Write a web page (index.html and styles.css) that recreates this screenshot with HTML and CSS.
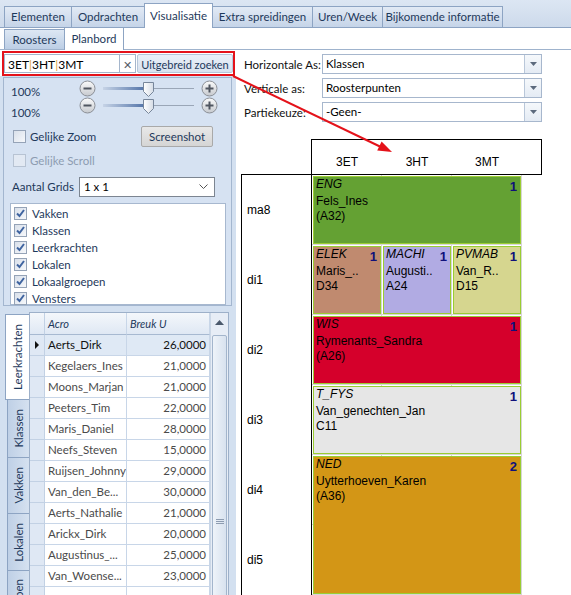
FILE: index.html
```html
<!DOCTYPE html>
<html>
<head>
    <title>Planbord</title>
    <link rel="stylesheet" href="styles.css">
</head>
<body>
    <svg class="defs" width="0" height="0">
        <defs>
            <linearGradient id="knob" x1="0" y1="0" x2="0" y2="1">
                <stop offset="0" stop-color="#fbfbfb"/>
                <stop offset="1" stop-color="#c6c9ce"/>
            </linearGradient>
            <linearGradient id="thumb" x1="0" y1="0" x2="1" y2="0">
                <stop offset="0" stop-color="#ffffff"/>
                <stop offset="1" stop-color="#d5dce6"/>
            </linearGradient>
        </defs>
    </svg>

    <div class="tabbar">
        <div class="tab tab-elementen">Elementen</div>
        <div class="tab tab-opdrachten">Opdrachten</div>
        <div class="tab tab-visualisatie active">Visualisatie</div>
        <div class="tab tab-extra">Extra spreidingen</div>
        <div class="tab tab-uren">Uren/Week</div>
        <div class="tab tab-info">Bijkomende informatie</div>
    </div>
    <div class="subtabs">
        <div class="subtab tab-roosters">Roosters</div>
        <div class="subtab tab-planbord active">Planbord</div>
    </div>

    <div class="main">
        <div class="left">
            <div class="search-wrap">
                <div class="search">
                    <div class="search-box">3ET<span class="sep">|</span>3HT<span class="sep">|</span>3MT</div>
                    <div class="search-clear">&#x2715;</div>
                    <div class="search-more">Uitgebreid zoeken</div>
                </div>
            </div>

            <div class="panel">
                <div class="zoom">
                    <div class="zoom-labels">
                        <div>100%</div>
                        <div>100%</div>
                    </div>
                    <div class="zoom-sliders">
                        <div class="slider">
                            <svg class="knob" width="17" height="17"><circle cx="8.5" cy="8.5" r="7.5" fill="url(#knob)" stroke="#8b8f96"/><rect x="4.5" y="7.5" width="8" height="2" fill="#505660"/></svg>
                            <div class="track-fill"></div>
                            <svg class="thumb" width="11" height="15"><path d="M0.5 0.5H10.5V9.5L5.5 14.5L0.5 9.5Z" fill="url(#thumb)" stroke="#77869b"/></svg>
                            <div class="track-rest"></div>
                            <svg class="knob" width="17" height="17"><circle cx="8.5" cy="8.5" r="7.5" fill="url(#knob)" stroke="#8b8f96"/><rect x="4.5" y="7.5" width="8" height="2" fill="#505660"/><rect x="7.5" y="4.5" width="2" height="8" fill="#505660"/></svg>
                        </div>
                        <div class="slider">
                            <svg class="knob" width="17" height="17"><circle cx="8.5" cy="8.5" r="7.5" fill="url(#knob)" stroke="#8b8f96"/><rect x="4.5" y="7.5" width="8" height="2" fill="#505660"/></svg>
                            <div class="track-fill"></div>
                            <svg class="thumb" width="11" height="15"><path d="M0.5 0.5H10.5V9.5L5.5 14.5L0.5 9.5Z" fill="url(#thumb)" stroke="#77869b"/></svg>
                            <div class="track-rest"></div>
                            <svg class="knob" width="17" height="17"><circle cx="8.5" cy="8.5" r="7.5" fill="url(#knob)" stroke="#8b8f96"/><rect x="4.5" y="7.5" width="8" height="2" fill="#505660"/><rect x="7.5" y="4.5" width="2" height="8" fill="#505660"/></svg>
                        </div>
                    </div>
                </div>

                <div class="opt-row">
                    <span class="check"></span>
                    <span>Gelijke Zoom</span>
                    <div class="btn">Screenshot</div>
                </div>
                <div class="opt-row disabled">
                    <span class="check"></span>
                    <span>Gelijke Scroll</span>
                </div>
                <div class="opt-row grids">
                    <span class="grids-label">Aantal Grids</span>
                    <div class="grids-combo">
                        <span>1 x 1</span>
                        <svg width="9" height="6"><path d="M0.5 0.5L4.5 4.5L8.5 0.5" stroke="#555" fill="none"/></svg>
                    </div>
                </div>

                <div class="list">
                    <div class="list-item"><span class="check on"><svg width="11" height="11"><path d="M2 5.5L4.5 8L9 2" stroke="#3f64a0" stroke-width="2" fill="none"/></svg></span>Vakken</div>
                    <div class="list-item"><span class="check on"><svg width="11" height="11"><path d="M2 5.5L4.5 8L9 2" stroke="#3f64a0" stroke-width="2" fill="none"/></svg></span>Klassen</div>
                    <div class="list-item"><span class="check on"><svg width="11" height="11"><path d="M2 5.5L4.5 8L9 2" stroke="#3f64a0" stroke-width="2" fill="none"/></svg></span>Leerkrachten</div>
                    <div class="list-item"><span class="check on"><svg width="11" height="11"><path d="M2 5.5L4.5 8L9 2" stroke="#3f64a0" stroke-width="2" fill="none"/></svg></span>Lokalen</div>
                    <div class="list-item"><span class="check on"><svg width="11" height="11"><path d="M2 5.5L4.5 8L9 2" stroke="#3f64a0" stroke-width="2" fill="none"/></svg></span>Lokaalgroepen</div>
                    <div class="list-item"><span class="check on"><svg width="11" height="11"><path d="M2 5.5L4.5 8L9 2" stroke="#3f64a0" stroke-width="2" fill="none"/></svg></span>Vensters</div>
                </div>
            </div>

            <div class="browser">
                <div class="vtabs">
                    <div class="vtab active"><span>Leerkrachten</span></div>
                    <div class="vtab klassen"><span>Klassen</span></div>
                    <div class="vtab vakken"><span>Vakken</span></div>
                    <div class="vtab lokalen"><span>Lokalen</span></div>
                    <div class="vtab groepen"><span>Lokaalgroepen</span></div>
                </div>
                <div class="grid">
                    <div class="grid-table">
                        <div class="grid-row head">
                            <div class="ind"></div>
                            <div class="c-acro">Acro</div>
                            <div class="c-num">Breuk U</div>
                        </div>
                        <div class="grid-row selected">
                            <div class="ind"><svg width="5" height="8"><path d="M0 0L4 4L0 8Z" fill="#111"/></svg></div>
                            <div class="c-acro">Aerts_Dirk</div>
                            <div class="c-num">26,0000</div>
                        </div>
                        <div class="grid-row"><div class="ind"></div><div class="c-acro">Kegelaers_Ines</div><div class="c-num">21,0000</div></div>
                        <div class="grid-row"><div class="ind"></div><div class="c-acro">Moons_Marjan</div><div class="c-num">21,0000</div></div>
                        <div class="grid-row"><div class="ind"></div><div class="c-acro">Peeters_Tim</div><div class="c-num">22,0000</div></div>
                        <div class="grid-row"><div class="ind"></div><div class="c-acro">Maris_Daniel</div><div class="c-num">28,0000</div></div>
                        <div class="grid-row"><div class="ind"></div><div class="c-acro">Neefs_Steven</div><div class="c-num">15,0000</div></div>
                        <div class="grid-row"><div class="ind"></div><div class="c-acro">Ruijsen_Johnny</div><div class="c-num">29,0000</div></div>
                        <div class="grid-row"><div class="ind"></div><div class="c-acro">Van_den_Be...</div><div class="c-num">30,0000</div></div>
                        <div class="grid-row"><div class="ind"></div><div class="c-acro">Aerts_Nathalie</div><div class="c-num">21,0000</div></div>
                        <div class="grid-row"><div class="ind"></div><div class="c-acro">Arickx_Dirk</div><div class="c-num">20,0000</div></div>
                        <div class="grid-row"><div class="ind"></div><div class="c-acro">Augustinus_...</div><div class="c-num">25,0000</div></div>
                        <div class="grid-row"><div class="ind"></div><div class="c-acro">Van_Woense...</div><div class="c-num">23,0000</div></div>
                        <div class="grid-row"><div class="ind"></div><div class="c-acro"></div><div class="c-num"></div></div>
                    </div>
                    <div class="scrollbar">
                        <div class="scroll-up"><svg width="9" height="5"><path d="M0 5L4.5 0L9 5Z" fill="#4b596c"/></svg></div>
                        <div class="scroll-thumb"><div class="grip"></div></div>
                    </div>
                </div>
            </div>
        </div>

        <div class="right">
            <div class="form-row">
                <div class="form-label">Horizontale As:</div>
                <div class="combo"><div class="combo-text">Klassen</div><div class="combo-btn"><svg width="7" height="4"><path d="M0 0H7L3.5 4Z" fill="#5c6a7d"/></svg></div></div>
            </div>
            <div class="form-row">
                <div class="form-label">Verticale as:</div>
                <div class="combo"><div class="combo-text">Roosterpunten</div><div class="combo-btn"><svg width="7" height="4"><path d="M0 0H7L3.5 4Z" fill="#5c6a7d"/></svg></div></div>
            </div>
            <div class="form-row">
                <div class="form-label">Partiekeuze:</div>
                <div class="combo"><div class="combo-text">-Geen-</div><div class="combo-btn"><svg width="7" height="4"><path d="M0 0H7L3.5 4Z" fill="#5c6a7d"/></svg></div></div>
            </div>

            <div class="planner">
                <div class="plan-head">
                    <div>3ET</div>
                    <div>3HT</div>
                    <div>3MT</div>
                </div>
                <div class="plan-body">
                    <div class="row-heads">
                        <div>ma8</div>
                        <div>di1</div>
                        <div>di2</div>
                        <div>di3</div>
                        <div>di4</div>
                        <div>di5</div>
                    </div>
                    <div class="cells">
                        <div class="lesson eng"><div class="subj">ENG<b>1</b></div>Fels_Ines<br>(A32)</div>
                        <div class="lesson elek"><div class="subj">ELEK<b>1</b></div>Maris_..<br>D34</div>
                        <div class="lesson machi"><div class="subj">MACHI<b>1</b></div>Augusti..<br>A24</div>
                        <div class="lesson pvmab"><div class="subj">PVMAB<b>1</b></div>Van_R..<br>D15</div>
                        <div class="lesson wis"><div class="subj">WIS<b>1</b></div>Rymenants_Sandra<br>(A26)</div>
                        <div class="lesson tfys"><div class="subj">T_FYS<b>1</b></div>Van_genechten_Jan<br>C11</div>
                        <div class="lesson ned"><div class="subj">NED<b>2</b></div>Uytterhoeven_Karen<br>(A36)</div>
                    </div>
                </div>
            </div>
        </div>
    </div>

    <!-- annotation arrow over the page -->
    <svg class="annot" width="571" height="595">
        <line x1="233" y1="76" x2="382" y2="147.5" stroke="#e4121a" stroke-width="2"/>
        <path d="M392 152L377.2 150.5L381.6 141.5Z" fill="#e4121a"/>
    </svg>
</body>
</html>
```

FILE: styles.css
```css
* {
    box-sizing: border-box;
}

body {
    margin: 0;
    width: 571px;
    height: 595px;
    overflow: hidden;
    position: relative;
    background: #ffffff;
    font-family: Lato, "Noto Sans", sans-serif;
    font-size: 11px;
    color: #1e395b;
}

.defs {
    position: absolute;
}

/* top tabs */
.tabbar {
    height: 28px;
    display: flex;
    align-items: flex-end;
    padding-left: 4px;
    background: linear-gradient(#dce6f3, #cddaeb);
    border-bottom: 1px solid #8da4c3;
}

.tab {
    height: 21px;
    line-height: 20px;
    margin-left: -1px;
    border: 1px solid #8da4c3;
    border-bottom: 0;
    background: linear-gradient(#e2eaf5, #c5d4e8);
    white-space: nowrap;
    text-align: center;
    font-size: 11.5px;
}

.tab:first-child {
    margin-left: 0;
}

.tab-elementen { width: 68px; }
.tab-opdrachten { width: 74px; }
.tab-visualisatie { width: 69px; }
.tab-extra { width: 101px; }
.tab-uren { width: 71px; }
.tab-info { width: 121px; }

.tab.active {
    height: 25px;
    line-height: 23px;
    margin-bottom: -1px;
    background: #ffffff;
}

.subtabs {
    height: 22px;
    display: flex;
    align-items: flex-end;
    padding-left: 4px;
    background: #ffffff;
    border-bottom: 1px solid #9fb3cd;
}

.subtab {
    height: 20px;
    line-height: 19px;
    margin-left: -1px;
    border: 1px solid #8da4c3;
    border-bottom: 0;
    background: linear-gradient(#dde7f3, #bccee5);
    text-align: center;
    font-size: 11.5px;
}

.subtab:first-child {
    margin-left: 0;
}

.tab-roosters { width: 61px; }
.tab-planbord { width: 60px; }

.subtab.active {
    height: 23px;
    line-height: 22px;
    margin-bottom: -1px;
    background: #ffffff;
}

.main {
    display: flex;
    height: 545px;
}

/* left column */
.left {
    width: 236px;
    flex: none;
    display: flex;
    flex-direction: column;
    background: #d3e0f0;
}

.search-wrap {
    background: #ffffff;
    padding: 1px 1px 0 2px;
}

.search {
    display: flex;
    height: 25px;
    border: 2px solid #e4121a;
    padding: 1px 0 1px 0;
}

.search-box {
    width: 115px;
    border: 1px solid #a5b6cc;
    border-right: 0;
    background: #ffffff;
    padding-left: 3px;
    line-height: 19px;
    font-size: 12px;
    color: #000000;
}

.sep {
    color: #e0a23e;
}

.search-clear {
    width: 17px;
    border: 1px solid #a5b6cc;
    background: #ffffff;
    color: #555d68;
    text-align: center;
    line-height: 19px;
    font-size: 11px;
}

.search-more {
    width: 96px;
    margin-left: 1px;
    border: 1px solid #b6c6da;
    border-radius: 2px;
    background: linear-gradient(#e9eff7, #d8e2ef);
    text-align: center;
    line-height: 19px;
    white-space: nowrap;
}

.panel {
    margin: 1px 4px 0 3px;
    height: 231px;
    border: 1px solid #a3b6cf;
    background: #d6e2f2;
}

.zoom {
    display: flex;
}

.zoom-labels {
    width: 75px;
    padding: 3px 0 0 7px;
    line-height: 21px;
    font-size: 11.5px;
}

.zoom-sliders {
    padding-top: 2px;
}

.slider {
    height: 17px;
    display: flex;
    align-items: center;
}

.track-fill {
    width: 40px;
    height: 3px;
    margin-left: 7px;
    background: linear-gradient(to right, #c6d3e6, #5878ab);
}

.track-rest {
    width: 40px;
    height: 1px;
    background: #9aa6b7;
}

.thumb {
    margin-top: 2px;
}

.slider .knob:last-child {
    margin-left: 7px;
}

.opt-row {
    display: flex;
    align-items: center;
    gap: 4px;
    padding-left: 9px;
    height: 21px;
    margin-top: 3px;
    font-size: 11.5px;
}

.opt-row:first-of-type {
    margin-top: 10px;
}

.opt-row.disabled {
    color: #8d9cb1;
    margin-top: 3px;
}

.opt-row.disabled .check {
    border-color: #b7c3d3;
    background: #e2e9f3;
}

.opt-row.grids {
    margin-top: 5px;
    padding-left: 8px;
    gap: 0;
}

.grids-label {
    width: 67px;
}

.grids-combo {
    width: 136px;
    height: 20px;
    border: 1px solid #7c8591;
    background: #ffffff;
    display: flex;
    align-items: center;
    justify-content: space-between;
    padding: 0 6px 0 4px;
    color: #000000;
}

.btn {
    margin-left: auto;
    margin-right: 18px;
    width: 72px;
    height: 21px;
    border: 1px solid #a9a9a9;
    border-radius: 2px;
    background: linear-gradient(#e8e8e8, #d5d5d5);
    text-align: center;
    line-height: 19px;
}

.check {
    width: 13px;
    height: 13px;
    flex: none;
    border: 1px solid #95a3b7;
    background: linear-gradient(135deg, #d9e0ea, #f6f8fb);
    display: flex;
    align-items: center;
    justify-content: center;
}

.list {
    margin: 6px 0 0 6px;
    width: 216px;
    height: 102px;
    border: 1px solid #a7b8cf;
    background: #ffffff;
    padding-top: 1px;
    font-size: 11.5px;
}

.list-item {
    height: 17px;
    display: flex;
    align-items: center;
    gap: 5px;
    padding-left: 3px;
}

/* lower browser: vertical tabs + grid */
.browser {
    display: flex;
    margin-top: 5px;
    padding-left: 5px;
}

.vtabs {
    width: 24px;
    flex: none;
    display: flex;
    flex-direction: column;
    padding-top: 3px;
    font-size: 11.5px;
}

.vtab {
    height: 58px;
    margin-left: 2px;
    border: 1px solid #8da4c3;
    border-right: 0;
    border-top: 0;
    background: linear-gradient(to right, #bfd0e6, #d5e1f0);
    display: flex;
    align-items: center;
    justify-content: center;
}

.vtab span {
    writing-mode: vertical-rl;
    transform: rotate(180deg);
    white-space: nowrap;
}

.vtab.active {
    height: 86px;
    margin-left: 0;
    border-top: 1px solid #8da4c3;
    background: #ffffff;
}

.vtab.vakken {
    height: 56px;
}

.vtab.lokalen {
    height: 57px;
}

.vtab.groepen {
    height: 84px;
    align-items: flex-start;
    padding-top: 8px;
}

.grid {
    width: 200px;
    height: 300px;
    margin-top: 1px;
    border: 1px solid #9db0c9;
    background: #ffffff;
    display: flex;
}

.grid-table {
    width: 180px;
}

.grid-row {
    display: flex;
    height: 21px;
}

.ind {
    width: 15px;
    background: #dfe8f4;
    border-right: 1px solid #c2d1e4;
    border-bottom: 1px solid #c2d1e4;
    display: flex;
    align-items: center;
    justify-content: center;
}

.c-acro,
.c-num {
    border-right: 1px solid #c8d6e8;
    border-bottom: 1px solid #c8d6e8;
    line-height: 20px;
    white-space: nowrap;
    overflow: hidden;
    color: #4a4a4a;
    font-size: 11.5px;
}

.c-acro {
    width: 82px;
    padding-left: 3px;
}

.c-num {
    width: 83px;
    padding-right: 3px;
    text-align: right;
}

.grid-row.head {
    height: 22px;
}

.grid-row.head > div {
    background: linear-gradient(#f4f7fb, #dfe8f4);
    border-bottom-color: #a7b9d1;
    font-style: italic;
    color: #1e395b;
    line-height: 21px;
    font-size: 11px;
}

.grid-row.head .c-num {
    text-align: left;
    padding-left: 3px;
}

.grid-row.selected .c-acro,
.grid-row.selected .c-num {
    background: #dfe9f5;
    color: #111111;
}

.scrollbar {
    width: 18px;
    background: #e7edf6;
    border-left: 1px solid #cbd7e6;
}

.scroll-up {
    height: 19px;
    display: flex;
    align-items: center;
    justify-content: center;
}

.scroll-thumb {
    height: 280px;
    margin: 3px 1px 0 1px;
    border: 1px solid #a3b5cc;
    border-radius: 2px;
    background: linear-gradient(to right, #eef3f9, #d8e2ef);
    padding-top: 183px;
}

.grip {
    width: 8px;
    height: 5px;
    margin: 0 auto;
    border-top: 1px solid #8d9cb1;
    border-bottom: 1px solid #8d9cb1;
    background: linear-gradient(#8d9cb1, #8d9cb1) center / 100% 1px no-repeat;
}

/* right column */
.right {
    flex: 1;
    padding-left: 5px;
}

.form-row {
    display: flex;
    align-items: center;
    height: 20px;
    margin-top: 4px;
    padding-left: 3px;
}

.form-label {
    width: 78px;
    color: #111111;
    font-size: 11.5px;
}

.combo {
    width: 220px;
    height: 20px;
    display: flex;
    border: 1px solid #a7b7cd;
    background: #ffffff;
}

.combo-text {
    flex: 1;
    padding-left: 3px;
    line-height: 18px;
    color: #000000;
    font-size: 11.5px;
}

.combo-btn {
    width: 17px;
    border-left: 1px solid #b9c7d9;
    background: linear-gradient(#f5f8fb, #e4ebf4);
    display: flex;
    align-items: center;
    justify-content: center;
}

/* planbord */
.planner {
    margin-top: 17px;
    font-family: "Liberation Sans", Arial, sans-serif;
    font-size: 12px;
    color: #000000;
}

.plan-head {
    margin-left: 70px;
    width: 231px;
    height: 36px;
    border: 1px solid #000000;
    display: flex;
    padding-top: 15px;
}

.plan-head div {
    width: 70px;
    text-align: center;
    line-height: 15px;
}

.plan-body {
    display: flex;
    margin-top: -1px;
}

.row-heads {
    width: 71px;
    border: 1px solid #000000;
    border-bottom: 0;
}

.row-heads div {
    height: 70px;
    line-height: 70px;
    padding-left: 5px;
}

.cells {
    margin-top: 1px;
    display: grid;
    grid-template-columns: repeat(3, 70px);
    grid-template-rows: repeat(6, 70px);
    background-image:
        linear-gradient(to left, #d6d6d6 1px, transparent 1px),
        linear-gradient(to top, #d6d6d6 1px, transparent 1px);
    background-size: 70px 70px;
}

.lesson {
    margin: 1px;
    border: 1px solid #9acd32;
    padding: 0 3px 0 2px;
    line-height: 15px;
    white-space: nowrap;
    overflow: hidden;
}

.subj {
    display: flex;
    justify-content: space-between;
    font-style: italic;
}

.subj b {
    font-style: normal;
    font-size: 13px;
    color: #10107a;
    padding-top: 2px;
}

.eng {
    grid-column: 1 / 4;
    background: #64a133;
}

.elek {
    background: #c08a6f;
}

.machi {
    background: #b1abe3;
}

.pvmab {
    background: #d6d68f;
}

.wis {
    grid-column: 1 / 4;
    background: #d5002b;
}

.tfys {
    grid-column: 1 / 4;
    background: #e6e6e6;
}

.ned {
    grid-column: 1 / 4;
    grid-row: 5 / 7;
    background: #d39616;
}

.annot {
    position: absolute;
    left: 0;
    top: 0;
    pointer-events: none;
}
```
